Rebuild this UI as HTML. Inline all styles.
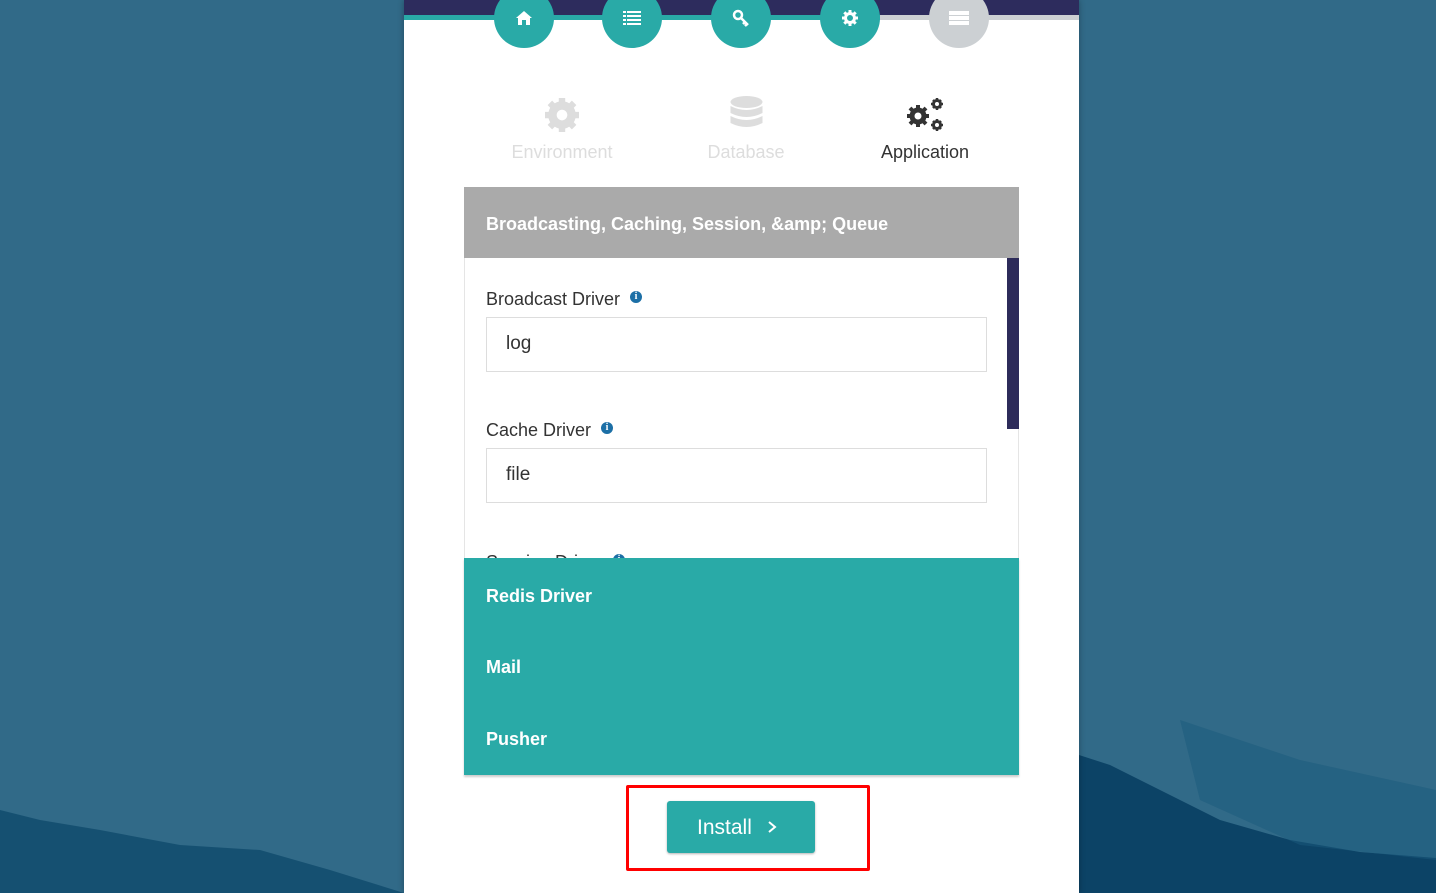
<!DOCTYPE html>
<html><head><meta charset="utf-8"><style>
*{margin:0;padding:0;box-sizing:border-box}
body{width:1436px;height:893px;overflow:hidden;background:#316a88;font-family:"Liberation Sans",sans-serif;position:relative}
.abs{position:absolute}
.card{left:404px;top:0;width:675px;height:893px;background:#fff;box-shadow:0 0 6px rgba(0,0,0,.3)}
.circ{width:60px;height:60px;border-radius:50%;background:#29aaa7;top:-12px;display:flex;align-items:center;justify-content:center}
.lbl{font-size:18px;color:#333;position:absolute}
.inp{position:absolute;left:486px;width:501px;height:55px;border:1px solid #ddd;font-size:19px;color:#333;padding:15px 0 0 19px}
.info{display:inline-block;width:12px;height:12px;border-radius:50%;background:#1c6fa6;color:#fff;font-size:10px;font-weight:bold;text-align:center;line-height:12px;font-family:"Liberation Serif",serif}
.acc{position:absolute;left:486px;color:#fff;font-weight:bold;font-size:18px}
</style></head><body>
<svg class="abs" style="left:0;top:0" width="1436" height="893">
<polygon points="0,810 40,820 100,830 180,845 260,850 330,870 404,893 0,893" fill="#0f4a6c" opacity=".8"/>
<polygon points="1079,755 1110,765 1160,790 1220,820 1290,840 1360,852 1436,858 1436,893 1079,893" fill="#0c4366"/>
<polygon points="1180,720 1300,760 1436,790 1436,860 1300,845 1200,800" fill="#1a5a7c" opacity=".5"/>
</svg>
<div class="abs card"></div>
<div class="abs" style="left:404px;top:0;width:675px;height:15px;background:#2d2c5d"></div>
<div class="abs" style="left:404px;top:15px;width:476px;height:5px;background:#29aaa7"></div>
<div class="abs" style="left:880px;top:15px;width:199px;height:5px;background:#ccd0d3"></div>
<div class="abs circ" style="left:494px"><svg width="18" height="16" viewBox="0 0 18 16"><path d="M9 1 L1 8 L3 8 L3 15 L7 15 L7 10 L11 10 L11 15 L15 15 L15 8 L17 8 Z" fill="#fff"/></svg></div>
<div class="abs circ" style="left:602px"><svg width="18" height="14"><g fill="#fff"><rect x="0" y="0" width="3" height="2"/><rect x="4" y="0" width="14" height="2"/><rect x="0" y="4" width="3" height="2"/><rect x="4" y="4" width="14" height="2"/><rect x="0" y="8" width="3" height="2"/><rect x="4" y="8" width="14" height="2"/><rect x="0" y="12" width="3" height="2"/><rect x="4" y="12" width="14" height="2"/></g></svg></div>
<div class="abs circ" style="left:711px"><svg width="18" height="18"><circle cx="6" cy="6" r="4" fill="none" stroke="#fff" stroke-width="2.5"/><path d="M9 9 L16 16 M13 13 L11 15 M15 15 L13 17" stroke="#fff" stroke-width="2.5"/></svg></div>
<div class="abs circ" style="left:820px"><svg width="16" height="16" viewBox="0 0 16 16"><circle cx="8" cy="8" r="4.5" fill="none" stroke="#fff" stroke-width="3"/><g stroke="#fff" stroke-width="3"><path d="M8 0v4M8 12v4M0 8h4M12 8h4M2.3 2.3l2.5 2.5M11.2 11.2l2.5 2.5M2.3 13.7l2.5-2.5M11.2 4.8l2.5-2.5"/></g></svg></div>
<div class="abs circ" style="left:929px;background:#ccd0d3"><svg width="20" height="14"><g fill="#fff"><rect width="20" height="4"/><rect y="5" width="20" height="4"/><rect y="10" width="20" height="4"/></g></svg></div>
<svg class="abs" style="left:545px;top:98px" width="34" height="34" viewBox="0 0 16 16"><circle cx="8" cy="8" r="4.5" fill="none" stroke="#ddd" stroke-width="4"/><g stroke="#ddd" stroke-width="3"><path d="M8 0v4M8 12v4M0 8h4M12 8h4M2.3 2.3l2.5 2.5M11.2 11.2l2.5 2.5M2.3 13.7l2.5-2.5M11.2 4.8l2.5-2.5"/></g></svg>
<svg class="abs" style="left:730px;top:96px" width="33" height="38"><g fill="#ddd"><ellipse cx="16.5" cy="6" rx="16" ry="6"/><path d="M0.5 10 Q16.5 18 32.5 10 V17 Q16.5 25 0.5 17Z"/><path d="M0.5 20 Q16.5 28 32.5 20 V27 Q16.5 35 0.5 27Z"/></g></svg>
<svg class="abs" style="left:905px;top:96px" width="40" height="38" viewBox="0 0 40 38"><g stroke="#333" fill="none"><circle cx="13" cy="20" r="6" stroke-width="5"/><path d="M13 9v5M13 26v5M2 20h5M19 20h5M5 12l3.5 3.5M17.5 24.5l3.5 3.5M5 28l3.5-3.5M17.5 15.5l3.5-3.5" stroke-width="4"/><circle cx="32" cy="8" r="3.5" stroke-width="3"/><path d="M32 2v2M32 12v2M26 8h2M36 8h2M28 4l1.5 1.5M34.5 10.5l1.5 1.5M28 12l1.5-1.5M34.5 5.5l1.5-1.5" stroke-width="2.5"/><circle cx="32" cy="29" r="3.5" stroke-width="3"/><path d="M32 23v2M32 33v2M26 29h2M36 29h2M28 25l1.5 1.5M34.5 31.5l1.5 1.5M28 33l1.5-1.5M34.5 26.5l1.5-1.5" stroke-width="2.5"/></g></svg>
<div class="abs" style="left:462px;top:142px;width:200px;text-align:center;font-size:18px;color:#ddd">Environment</div>
<div class="abs" style="left:646px;top:142px;width:200px;text-align:center;font-size:18px;color:#ddd">Database</div>
<div class="abs" style="left:825px;top:142px;width:200px;text-align:center;font-size:18px;color:#333">Application</div>
<div class="abs" style="left:464px;top:187px;width:555px;height:71px;background:#aaa"></div>
<div class="acc" style="top:214px">Broadcasting, Caching, Session, &amp;amp; Queue</div>
<div class="abs" style="left:464px;top:258px;width:555px;height:300px;border-left:1px solid #e5e5e5;border-right:1px solid #e5e5e5"></div>
<div class="abs" style="left:1007px;top:258px;width:12px;height:171px;background:#2d2b5a"></div>
<div class="lbl" style="left:486px;top:289px">Broadcast Driver &nbsp;<span class="info" style="vertical-align:6px">i</span></div>
<div class="inp" style="top:317px">log</div>
<div class="lbl" style="left:486px;top:420px">Cache Driver &nbsp;<span class="info" style="vertical-align:6px">i</span></div>
<div class="inp" style="top:448px">file</div>
<div class="abs" style="left:464px;top:545px;width:555px;height:13px;overflow:hidden"><div class="lbl" style="left:22px;top:7px">Session Driver &nbsp;<span class="info" style="vertical-align:6px">i</span></div></div>
<div class="abs" style="left:464px;top:558px;width:555px;height:217px;background:#29aaa7;box-shadow:0 2px 2px rgba(0,0,0,.2)"></div>
<div class="acc" style="top:586px">Redis Driver</div>
<div class="acc" style="top:657px">Mail</div>
<div class="acc" style="top:729px">Pusher</div>
<div class="abs" style="left:626px;top:785px;width:244px;height:86px;border:3px solid #f00;border-radius:2px"></div>
<div class="abs" style="left:667px;top:801px;width:148px;height:52px;background:#29aaa7;border-radius:3px;box-shadow:0 1px 2px rgba(0,0,0,.3);color:#fff;font-size:21px;padding:15px 0 0 30px">Install <svg width="12" height="14" style="margin-left:8px"><path d="M3 2 L9 7 L3 12" stroke="#fff" stroke-width="2" fill="none"/></svg></div>
</body></html>
